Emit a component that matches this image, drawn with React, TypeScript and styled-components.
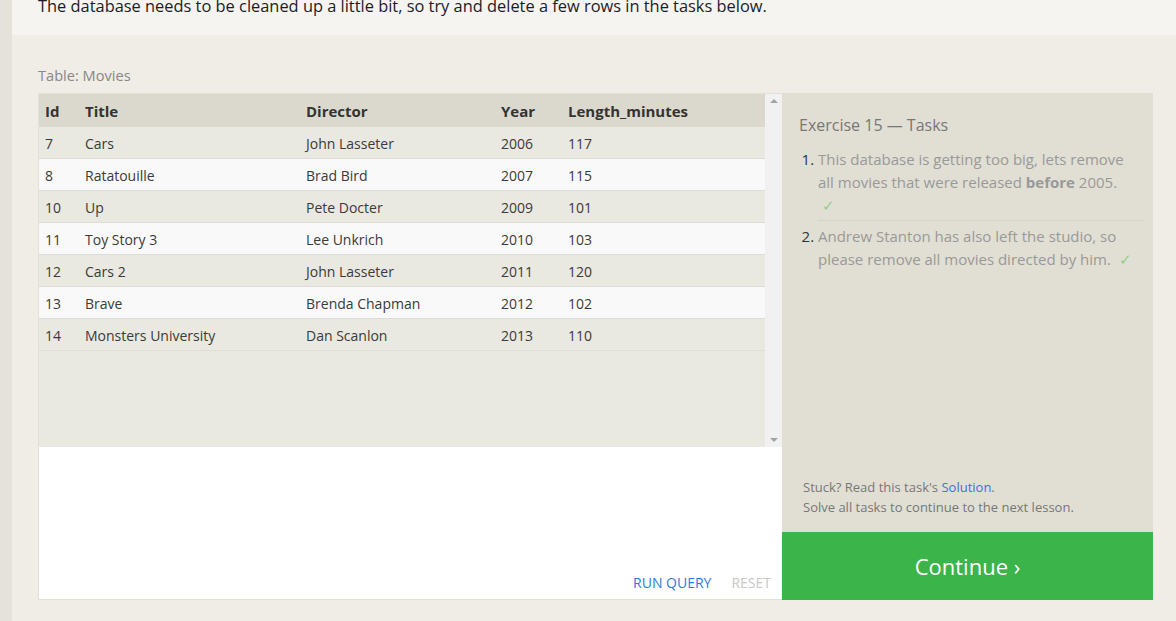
import React from "react";
import styled, { createGlobalStyle } from "styled-components";

const Global = createGlobalStyle`
  html, body { margin: 0; padding: 0; }
  body {
    background: #efede6;
    font-family: "Open Sans", "Noto Sans", sans-serif;
    overflow: hidden;
  }
`;

const Page = styled.div`
  display: flex;
  height: 621px;
`;

const Strip = styled.div`
  width: 12px;
  flex: none;
  background: #e5e2dc;
`;

const Main = styled.div`
  flex: 1;
  display: flex;
  flex-direction: column;
  min-width: 0;
`;

const Intro = styled.div`
  height: 35px;
  background: #f5f4f0;
  overflow: hidden;
  padding-left: 26px;
`;

const IntroText = styled.p`
  margin: -6px 0 0;
  font-size: 16.4px;
  line-height: 24px;
  color: #1c1c28;
  white-space: nowrap;
`;

const Exercise = styled.div`
  flex: 1;
  padding: 30px 23px 0 26px;
  display: flex;
  flex-direction: column;
`;

const TableLabel = styled.div`
  font-size: 14.6px;
  color: #888;
  line-height: 20px;
  margin-bottom: 8px;
`;

const Widget = styled.div`
  display: flex;
  height: 507px;
`;

const LeftPane = styled.div`
  width: 744px;
  display: flex;
  flex-direction: column;
  border: 1px solid #e2e0d8;
  border-right: none;
  box-sizing: border-box;
`;

const TableArea = styled.div`
  height: 353px;
  display: flex;
  background: #e9e8e1;
`;

const TableScroll = styled.div`
  flex: 1;
`;

const Table = styled.table`
  width: 100%;
  border-collapse: collapse;
  font-size: 14px;
  color: #3a3a3a;
`;

const Th = styled.th<{ $w?: number; $pl?: number }>`
  text-align: left;
  font-weight: 700;
  color: #333;
  background: #dbd9ce;
  height: 33px;
  padding: 0 0 0 ${(p) => p.$pl ?? 0}px;
  width: ${(p) => (p.$w ? `${p.$w}px` : "auto")};
  font-size: 15px;
`;

const Tr = styled.tr<{ $even: boolean }>`
  background: ${(p) => (p.$even ? "#f9f9f9" : "#e9e8e1")};
  border-bottom: 1px solid #dddcd5;
`;

const Td = styled.td<{ $pl?: number }>`
  height: 30px;
  padding: 1px 0 0 ${(p) => p.$pl ?? 0}px;
  white-space: nowrap;
`;

const ScrollBar = styled.div`
  width: 17px;
  flex: none;
  background: #f1f1f1;
  display: flex;
  flex-direction: column;
  justify-content: space-between;
  align-items: center;
  padding: 5px 0;
  box-sizing: border-box;
`;

const Arrow = styled.div<{ $up?: boolean }>`
  width: 0;
  height: 0;
  border-left: 4px solid transparent;
  border-right: 4px solid transparent;
  ${(p) =>
    p.$up ? "border-bottom: 4px solid #a3a3a3;" : "border-top: 4px solid #a3a3a3;"}
`;

const Editor = styled.div`
  flex: 1;
  background: #fff;
  display: flex;
  justify-content: flex-end;
  align-items: flex-end;
  gap: 20px;
  padding: 0 11px 6px 0;
`;

const EditorButton = styled.span<{ $disabled?: boolean }>`
  font-size: 14px;
  line-height: 20px;
  color: ${(p) => (p.$disabled ? "#c8c8c8" : "#2d7be0")};
  text-transform: uppercase;
`;

const RightPane = styled.div`
  width: 371px;
  background: #e1dfd4;
  display: flex;
  flex-direction: column;
`;

const Tasks = styled.div`
  flex: 1;
  padding: 21px 8px 0 17px;
  display: flex;
  flex-direction: column;
`;

const TasksTitle = styled.div`
  font-size: 16px;
  color: #777;
  line-height: 22px;
  margin-bottom: 12px;
`;

const TaskList = styled.ol`
  margin: 0;
  padding: 0 0 0 19px;
  font-size: 15px;
  line-height: 23px;
`;

const Task = styled.li<{ $last?: boolean }>`
  color: #333;
  padding: 0 4px 3px 0;
  margin-bottom: 4px;
  border-bottom: ${(p) => (p.$last ? "none" : "1px solid #d6d4ca")};
`;

const TaskText = styled.span`
  color: #999;
`;

const Check = styled.span<{ $ml: number }>`
  color: #8fd08f;
  margin-left: ${(p) => p.$ml}px;
`;

const Spacer = styled.div`
  flex: 1;
`;

const Note = styled.div`
  padding: 0 0 15px 21px;
  font-size: 13px;
  line-height: 20px;
  color: #777;
`;

const Link = styled.span`
  color: #3b6fe0;
`;

const Continue = styled.div`
  height: 68px;
  background: #3bb54a;
  color: #fff;
  font-size: 22px;
  display: flex;
  align-items: center;
  justify-content: center;
`;

const rows = [
  [7, "Cars", "John Lasseter", 2006, 117],
  [8, "Ratatouille", "Brad Bird", 2007, 115],
  [10, "Up", "Pete Docter", 2009, 101],
  [11, "Toy Story 3", "Lee Unkrich", 2010, 103],
  [12, "Cars 2", "John Lasseter", 2011, 120],
  [13, "Brave", "Brenda Chapman", 2012, 102],
  [14, "Monsters University", "Dan Scanlon", 2013, 110],
];

export default function App() {
  return (
    <>
      <Global />
      <Page>
        <Strip />
        <Main>
          <Intro>
            <IntroText>
              The database needs to be cleaned up a little bit, so try and delete a few rows in the tasks below.
            </IntroText>
          </Intro>
          <Exercise>
            <TableLabel>Table: Movies</TableLabel>
            <Widget>
              <LeftPane>
                <TableArea>
                  <TableScroll>
                    <Table>
                      <thead>
                        <tr>
                          <Th $w={40} $pl={6}>Id</Th>
                          <Th $w={221}>Title</Th>
                          <Th $w={195}>Director</Th>
                          <Th $w={67}>Year</Th>
                          <Th>Length_minutes</Th>
                        </tr>
                      </thead>
                      <tbody>
                        {rows.map((r, i) => (
                          <Tr key={i} $even={i % 2 === 1}>
                            <Td $pl={6}>{r[0]}</Td>
                            <Td>{r[1]}</Td>
                            <Td>{r[2]}</Td>
                            <Td>{r[3]}</Td>
                            <Td>{r[4]}</Td>
                          </Tr>
                        ))}
                      </tbody>
                    </Table>
                  </TableScroll>
                  <ScrollBar>
                    <Arrow $up />
                    <Arrow />
                  </ScrollBar>
                </TableArea>
                <Editor>
                  <EditorButton>Run Query</EditorButton>
                  <EditorButton $disabled>Reset</EditorButton>
                </Editor>
              </LeftPane>
              <RightPane>
                <Tasks>
                  <TasksTitle>Exercise 15 — Tasks</TasksTitle>
                  <TaskList>
                    <Task>
                      <TaskText>
                        This database is getting too big, lets remove all movies that were released{" "}
                        <b>before</b> 2005.
                        <br />
                        <Check $ml={4}>✓</Check>
                      </TaskText>
                    </Task>
                    <Task $last>
                      <TaskText>
                        Andrew Stanton has also left the studio, so please remove all movies directed by him.
                        <Check $ml={8}>✓</Check>
                      </TaskText>
                    </Task>
                  </TaskList>
                  <Spacer />
                </Tasks>
                <Note>
                  Stuck? Read this task's <Link>Solution</Link>.
                  <br />
                  Solve all tasks to continue to the next lesson.
                </Note>
                <Continue>Continue ›</Continue>
              </RightPane>
            </Widget>
          </Exercise>
        </Main>
      </Page>
    </>
  );
}
